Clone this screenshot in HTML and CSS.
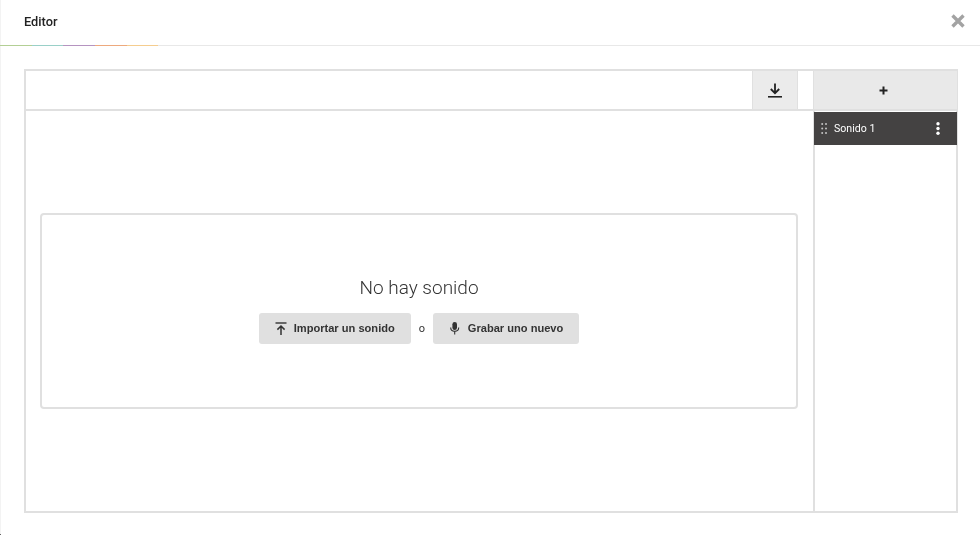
FILE: index.html
```html
<!DOCTYPE html>
<html lang="es">
<head>
<meta charset="utf-8">
<title>Editor</title>
<link rel="stylesheet" href="styles.css">
</head>
<body>
<div class="modal">
  <header class="head">
    <h1 class="title">Editor</h1>
    <button class="close" aria-label="Cerrar">
      <svg width="14" height="14" viewBox="0 0 14 14"><path d="M1.5 1.5 12.5 12.5M12.5 1.5 1.5 12.5" stroke="#a3a3a3" stroke-width="3.4" fill="none"/></svg>
    </button>
    <div class="strip"><i class="s1"></i><i class="s2"></i><i class="s3"></i><i class="s4"></i><i class="s5"></i></div>
  </header>
  <main class="editor">
    <section class="stage">
      <div class="toolbar">
        <button class="tool" aria-label="Descargar">
          <svg width="14" height="15" viewBox="0 0 14 15"><path d="M7 0.5V10M2.8 6 7 10.2 11.2 6" stroke="#222" stroke-width="1.8" fill="none"/><path d="M0 13.8H14" stroke="#222" stroke-width="1.6"/></svg>
        </button>
      </div>
      <div class="canvas">
        <div class="empty">
          <p class="empty-title">No hay sonido</p>
          <div class="actions">
            <button class="btn">
              <svg width="12" height="13" viewBox="0 0 12 13"><path d="M0.5 1H11.5" stroke="#333" stroke-width="1.4"/><path d="M6 13V4.5M2.4 7.6 6 4 9.6 7.6" stroke="#333" stroke-width="1.5" fill="none"/></svg>
              Importar un sonido
            </button>
            <span class="or">o</span>
            <button class="btn">
              <svg width="12" height="13" viewBox="0 0 12 13"><rect x="3.4" y="0" width="4.6" height="8" rx="2.3" fill="#333"/><path d="M1.7 5.6C1.7 8.2 3.5 9.4 5.7 9.4S9.7 8.2 9.7 5.6M5.7 9.4V12.6" stroke="#333" stroke-width="1.1" fill="none"/></svg>
              Grabar uno nuevo
            </button>
          </div>
        </div>
      </div>
    </section>
    <aside class="side">
      <button class="add" aria-label="Añadir">
        <svg width="9" height="9" viewBox="0 0 9 9"><path d="M4.5 0.5V8.5M0.5 4.5H8.5" stroke="#222" stroke-width="2"/></svg>
      </button>
      <div class="sound">
        <svg width="7" height="11" viewBox="0 0 7 11"><g fill="#c4c4c4"><circle cx="1.2" cy="1" r="1"/><circle cx="5" cy="1" r="1"/><circle cx="1.2" cy="5.5" r="1"/><circle cx="5" cy="5.5" r="1"/><circle cx="1.2" cy="10" r="1"/><circle cx="5" cy="10" r="1"/></g></svg>
        <span class="sound-name">Sonido 1</span>
        <svg class="more" width="4" height="13" viewBox="0 0 4 13"><g fill="#fff"><circle cx="2" cy="1.7" r="1.7"/><circle cx="2" cy="6.5" r="1.7"/><circle cx="2" cy="11.3" r="1.7"/></g></svg>
      </div>
    </aside>
  </main>
</div>
</body>
</html>
```
FILE: styles.css
```css
* { box-sizing: border-box; }
html, body { margin: 0; height: 100%; background: #fff; }
body { overflow: hidden; font-family: "Roboto", "Liberation Sans", sans-serif; color: #333; }
button { font: inherit; border: 0; padding: 0; cursor: pointer; }
.modal { position: relative; display: flex; flex-direction: column; height: 535px; width: 980px; padding-bottom: 22px; will-change: transform; box-shadow: inset 1px 0 0 #f3f3f3; }
.modal::after { content: ""; position: absolute; left: 0; bottom: 0; width: 1px; height: 1px; background: #666; }
.head { position: relative; flex: 0 0 46px; border-bottom: 1px solid #e8e8e8; display: flex; align-items: flex-start; justify-content: space-between; padding: 14px 15px 0 24px; }
.title { margin: 0; font-size: 12.8px; line-height: 15px; font-weight: 500; color: #222; }
.close { background: none; display: flex; }
.strip { position: absolute; left: 0; bottom: -1px; display: flex; width: 158.3px; height: 1px; }
.strip i { display: block; flex: 1; height: 1px; }
.s1 { background: #b3cf95; }
.s2 { background: #9ad0c8; }
.s3 { background: #b594c0; }
.s4 { background: #eda97e; }
.s5 { background: #f5cd8f; }
.editor { flex: 1; display: flex; margin: 23px 22px 0 24px; border: 2px solid #e0e0e0; }
.stage { flex: 1; display: flex; flex-direction: column; border-right: 2px solid #e0e0e0; min-width: 0; }
.toolbar { flex: 0 0 40px; display: flex; justify-content: flex-end; padding-right: 15px; border-bottom: 2px solid #e0e0e0; }
.tool { width: 46px; background: #ebebeb; border-left: 1px solid #e0e0e0; border-right: 1px solid #e0e0e0; display: flex; align-items: center; justify-content: center; }
.canvas { flex: 1; display: flex; align-items: center; padding: 0 15px 0 14px; }
.empty { flex: 1; height: 196px; border: 2px solid #e0e0e0; border-radius: 4px; display: flex; flex-direction: column; align-items: center; padding-top: 61px; }
.empty-title { margin: 0 0 13px; font-size: 19px; line-height: 24px; font-weight: 300; color: #333; }
.actions { display: flex; align-items: center; gap: 8px; }
.btn { height: 31px; background: #e0e0e0; border-radius: 3px; display: flex; align-items: center; gap: 7px; padding: 0 16px 2px; font-family: "Liberation Sans", sans-serif; font-weight: 700; font-size: 11.1px; color: #333; }
.btn svg { margin-top: 2px; }
.or { font-size: 11px; width: 6px; text-align: center; }
.side { flex: 0 0 141px; display: flex; flex-direction: column; }
.add { flex: 0 0 40px; margin: 0 -1px; background: #e9e9e9; display: flex; align-items: center; justify-content: center; padding-right: 5px; border-bottom: 2px solid #e0e0e0; }
.sound { margin: 1px -1px 0; height: 33px; background: #444242; display: flex; align-items: center; padding: 0 17px 0 7px; gap: 6px; color: #fff; font-size: 10.6px; }
.sound-name { flex: 1; }
```
